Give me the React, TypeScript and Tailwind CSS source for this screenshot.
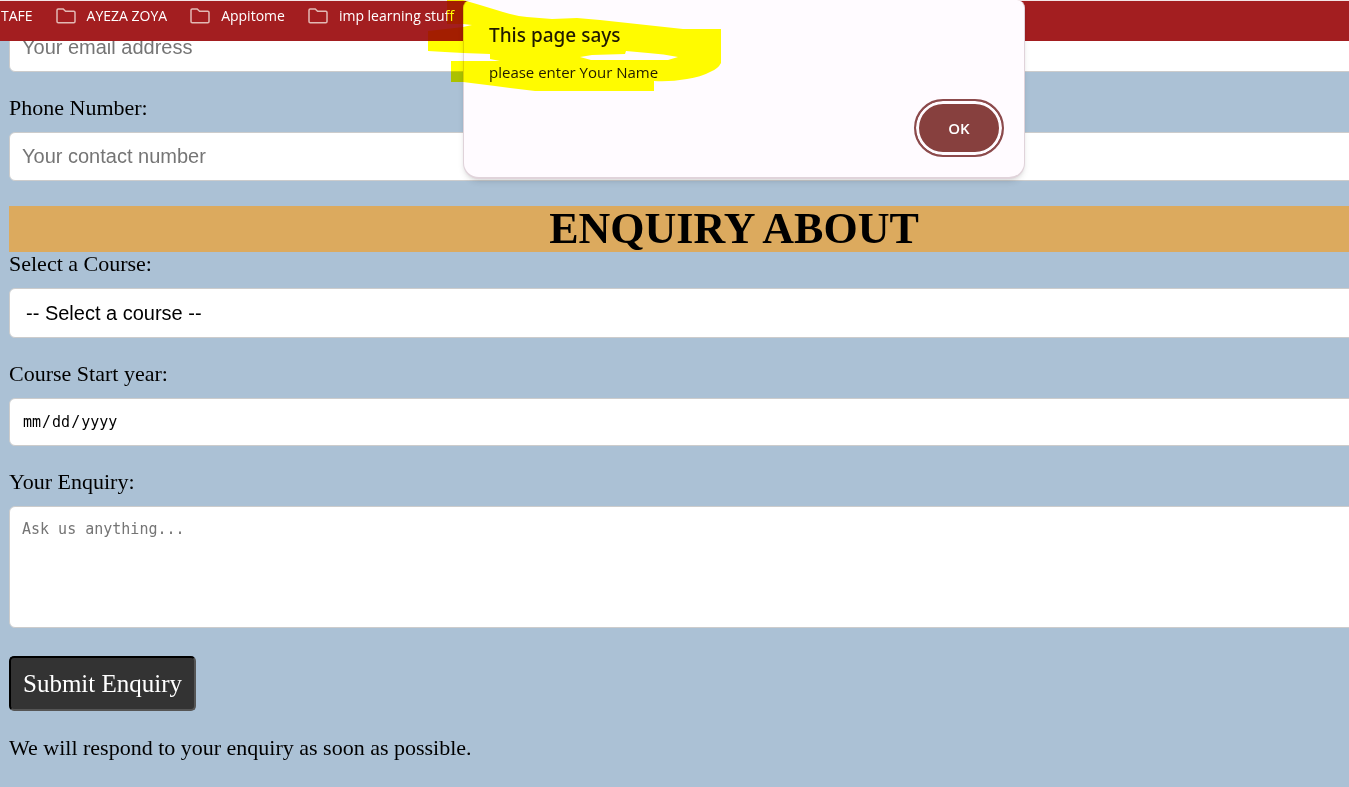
import React from "react";

const bookmarks = ["AYEZA ZOYA", "Appitome", "imp learning stuff"];

const control =
  "block w-full rounded-md border border-[#ccc] bg-white px-3 font-['Liberation_Sans',sans-serif] text-[20px] text-black placeholder:text-[#757575]";

const label = "block text-[22px] leading-6";

function FolderIcon() {
  return (
    <svg className="h-4 w-5" viewBox="0 0 20 16" fill="none" stroke="#e3b9b4" strokeWidth="1.5" aria-hidden="true">
      <path d="M2.2 1h5l2.4 2.3h8.2c.8 0 1.2.4 1.2 1.2v9c0 .8-.4 1.2-1.2 1.2H2.2c-.8 0-1.2-.4-1.2-1.2V2.2C1 1.4 1.4 1 2.2 1Z" />
    </svg>
  );
}

function BookmarksBar() {
  return (
    <nav className="relative z-10 flex h-[41px] gap-[23px] border-t border-[#f3e5e5] bg-[#a31e20] pt-1 pl-px font-['Open_Sans',sans-serif] text-[14px] leading-[22px] text-white">
      <a href="#tafe">TAFE</a>
      {bookmarks.map((name) => (
        <a key={name} href="#folder" className="flex h-[22px] items-center gap-[11px] whitespace-nowrap">
          <FolderIcon />
          {name}
        </a>
      ))}
    </nav>
  );
}

function AlertDialog() {
  return (
    <div
      role="alertdialog"
      aria-labelledby="alert-title"
      aria-describedby="alert-text"
      className="absolute top-0 left-[463px] z-20 flex w-[562px] flex-col rounded-t-lg rounded-b-2xl border-x border-b-2 border-[#e0d3da] bg-[#fffbff] px-[25px] pt-[22px] pb-5 font-['Open_Sans',sans-serif] text-[#201a1a] shadow-md"
    >
      <h2 id="alert-title" className="font-['Noto_Sans',sans-serif] text-[19px] leading-[26px] font-medium">
        This page says
      </h2>
      <p id="alert-text" className="mt-3 text-[15px] leading-6">
        please enter Your Name
      </p>
      <button
        type="button"
        className="mt-[15px] mr-[-5px] h-[58px] w-[90px] self-end rounded-full border-2 border-[#8c4a4c] bg-[#87403e] text-[15px] font-semibold text-white shadow-[inset_0_0_0_3px_#fffbff]"
      >
        OK
      </button>
    </div>
  );
}

function Highlighter() {
  return (
    <svg
      className="pointer-events-none absolute top-0 left-[420px] z-30 h-[100px] w-[310px] mix-blend-multiply"
      viewBox="420 0 310 100"
      fill="#ffff00"
      fillRule="evenodd"
      aria-hidden="true"
    >
      <path d="M447 0H463L480 5L503 12Q515 16 527 17L552 19L577 18L600 20L683 29H721V63Q718 69 710 72Q701 77 687 79Q670 82 654 81V91H535L495 86L463 82H451V61H500L490 59V54L463 53L445 52L428 51V31L463 27L472 25L463 24H447ZM580 57L591 60H668L678 57Q664 54 648 53L626 51L625 54L592 55Z" />
    </svg>
  );
}

export default function App() {
  return (
    <div className="relative min-h-screen overflow-hidden bg-[#abc1d5] font-['Liberation_Serif',serif] text-black">
      <BookmarksBar />
      <form className="-mt-[18px] -mr-[110px] ml-[9px]" onSubmit={(e) => e.preventDefault()}>
        <input type="email" aria-label="Email" placeholder="Your email address" className={`${control} h-[49px]`} />

        <label htmlFor="phone" className={`${label} mt-6`}>
          Phone Number:
        </label>
        <input id="phone" type="tel" placeholder="Your contact number" className={`${control} mt-3 h-[49px]`} />

        <h1 className="mt-[25px] bg-[#dcaa5e] text-center text-[44px] leading-[46px] font-bold">ENQUIRY ABOUT</h1>

        <label htmlFor="course" className={label}>
          Select a Course:
        </label>
        <select id="course" className={`${control} mt-3 h-[50px] appearance-none pl-4`}>
          <option>-- Select a course --</option>
        </select>

        <label htmlFor="start" className={`${label} mt-6`}>
          Course Start year:
        </label>
        <input
          id="start"
          type="date"
          className="mt-3 block h-12 w-full rounded-md border border-[#ccc] bg-white px-3 font-['DejaVu_Sans_Mono',monospace] text-[15px] text-black"
        />

        <label htmlFor="enquiry" className={`${label} mt-6`}>
          Your Enquiry:
        </label>
        <textarea
          id="enquiry"
          placeholder="Ask us anything..."
          className="mt-3 block h-[122px] w-full resize-none rounded-md border border-[#ccc] bg-white px-3 py-3 font-['DejaVu_Sans_Mono',monospace] text-[15px] leading-5 text-black placeholder:text-[#757575]"
        />

        <button
          type="submit"
          className="mt-7 h-[55px] rounded-[5px] border-2 border-t-black border-r-[#555] border-b-[#555] border-l-black bg-[#333] px-3 text-[25px] text-white"
        >
          Submit Enquiry
        </button>
        <p className="mt-[25px] text-[22px] leading-6">We will respond to your enquiry as soon as possible.</p>
      </form>
      <AlertDialog />
      <Highlighter />
    </div>
  );
}
